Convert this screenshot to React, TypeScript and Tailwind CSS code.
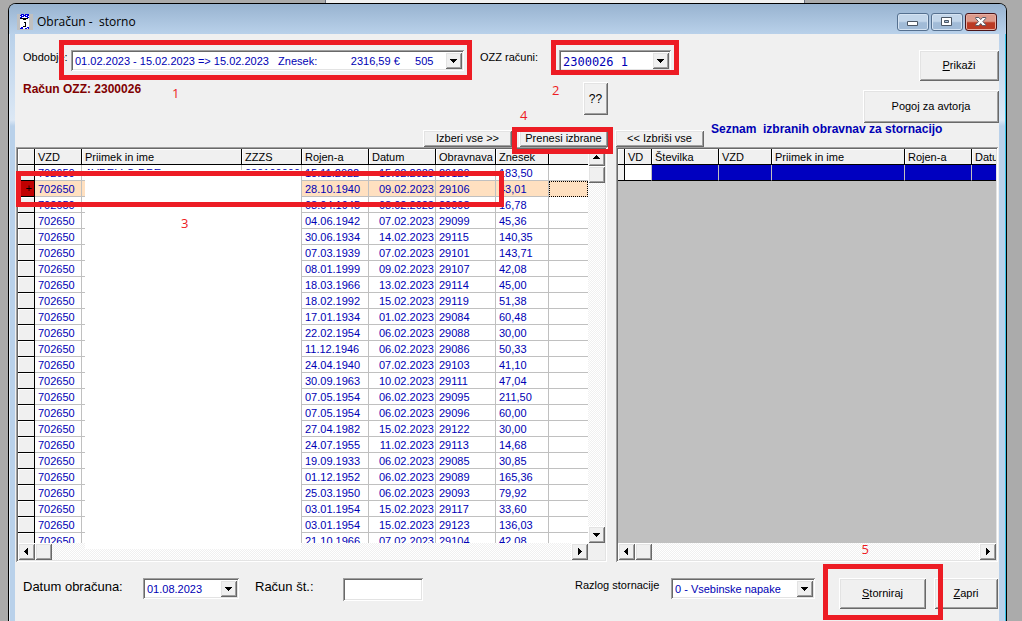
import React from "react";

const RAISED =
  "bg-[#f0f0f0] shadow-[inset_1px_1px_0_#ffffff,inset_-1px_-1px_0_#696969,inset_2px_2px_0_#e3e3e3,inset_-2px_-2px_0_#a0a0a0]";
const SUNKEN =
  "p-[2px] shadow-[inset_1px_1px_0_#a0a0a0,inset_-1px_-1px_0_#ffffff,inset_2px_2px_0_#696969,inset_-2px_-2px_0_#e3e3e3]";
const TRACK = "bg-[repeating-conic-gradient(#ffffff_0_25%,#f0f0f0_0_50%)] bg-[length:2px_2px]";
const TH =
  "h-4 overflow-hidden whitespace-nowrap border-r border-b border-black bg-[#f0f0f0] p-0 pt-px pl-[3px] text-left align-top font-normal leading-[14px] text-black shadow-[inset_1px_1px_0_#ffffff]";
const TD =
  "h-4 overflow-hidden whitespace-nowrap border-r border-b border-[#c0c0c0] p-0 pt-px pl-[3px] leading-[14px]";

type Direction = "up" | "down" | "left" | "right";

const ARROWS: Record<Direction, string> = {
  up: "M4 2h1v1h1v1h1v1h1v1H1V5h1V4h1V3h1z",
  down: "M1 3h7v1H7v1H6v1H5v1H4V6H3V5H2V4H1z",
  left: "M6 1v7H5V7H4V6H3V5H2V4h1V3h1V2h1V1z",
  right: "M3 1v7h1V7h1V6h1V5h1V4H6V3H5V2H4V1z",
};

function Arrow({ dir }: { dir: Direction }) {
  return (
    <svg width="9" height="9" viewBox="0 0 9 9" shapeRendering="crispEdges" aria-hidden="true">
      <path d={ARROWS[dir]} />
    </svg>
  );
}

function ScrollButton({ dir, label }: { dir: Direction; label: string }) {
  return (
    <button aria-label={label} className={`flex h-[17px] w-[17px] shrink-0 items-center justify-center ${RAISED}`}>
      <Arrow dir={dir} />
    </button>
  );
}

function HorizontalScroll() {
  return (
    <div className={`flex h-[17px] flex-1 ${TRACK}`}>
      <ScrollButton dir="left" label="Levo" />
      <div className={`w-[17px] ${RAISED}`} />
      <div className="flex-1" />
      <ScrollButton dir="right" label="Desno" />
    </div>
  );
}

function Mark({ frame }: { frame: string }) {
  return <div className={`pointer-events-none absolute z-20 border-[5px] border-[#ed1c24] ${frame}`} />;
}

function Step({ n, place }: { n: number; place: string }) {
  return (
    <span
      className={`pointer-events-none absolute z-20 font-['Open_Sans','Noto_Sans',sans-serif] text-[13px] leading-4 text-[#ed1c24] ${place}`}
    >
      {n}
    </span>
  );
}

function Combo({ id, text, size, font }: { id: string; text: string; size: string; font: string }) {
  return (
    <div className={`grid h-[21px] bg-white ${SUNKEN} ${size}`}>
      <select
        id={id}
        className={`col-start-1 row-start-1 h-[17px] w-full appearance-none bg-transparent pt-px pl-[2px] text-[#0000b4] outline-none ${font}`}
      >
        <option>{text}</option>
      </select>
      <span
        className={`pointer-events-none col-start-1 row-start-1 flex h-[17px] w-[17px] items-center justify-center justify-self-end ${RAISED}`}
      >
        <Arrow dir="down" />
      </span>
    </div>
  );
}

function Push({ children, size }: { children: React.ReactNode; size: string }) {
  return <button className={`flex shrink-0 items-center justify-center whitespace-nowrap ${RAISED} ${size}`}>{children}</button>;
}

const ROWS: string[][] = [
  ["15.11.2022", "15.02.2023", "29120", "183,50"],
  ["28.10.1940", "09.02.2023", "29106", "43,01"],
  ["08.04.1945", "08.02.2023", "29098", "16,78"],
  ["04.06.1942", "07.02.2023", "29099", "45,36"],
  ["30.06.1934", "14.02.2023", "29115", "140,35"],
  ["07.03.1939", "07.02.2023", "29101", "143,71"],
  ["08.01.1999", "09.02.2023", "29107", "42,08"],
  ["18.03.1966", "13.02.2023", "29114", "45,00"],
  ["18.02.1992", "15.02.2023", "29119", "51,38"],
  ["17.01.1934", "01.02.2023", "29084", "60,48"],
  ["22.02.1954", "06.02.2023", "29088", "30,00"],
  ["11.12.1946", "06.02.2023", "29086", "50,33"],
  ["24.04.1940", "07.02.2023", "29103", "41,10"],
  ["30.09.1963", "10.02.2023", "29111", "47,04"],
  ["07.05.1954", "06.02.2023", "29095", "211,50"],
  ["07.05.1954", "06.02.2023", "29096", "60,00"],
  ["27.04.1982", "15.02.2023", "29122", "30,00"],
  ["24.07.1955", "11.02.2023", "29113", "14,68"],
  ["19.09.1933", "06.02.2023", "29085", "30,85"],
  ["01.12.1952", "06.02.2023", "29089", "165,36"],
  ["25.03.1950", "06.02.2023", "29093", "79,92"],
  ["03.01.1954", "15.02.2023", "29117", "33,60"],
  ["03.01.1954", "15.02.2023", "29123", "136,03"],
  ["21.10.1966", "07.02.2023", "29104", "42,08"],
];

function SourceGrid() {
  return (
    <section className={`relative w-[591px] shrink-0 bg-white ${SUNKEN}`}>
      <div className="flex">
        <div className="h-[394px] w-[570px] overflow-hidden">
          <table className="w-[570px] table-fixed border-separate border-spacing-0 text-[#0000b4]">
            <colgroup>
              <col className="w-[17px]" />
              <col className="w-[47px]" />
              <col className="w-[160px]" />
              <col className="w-[60px]" />
              <col className="w-[67px]" />
              <col className="w-[67px]" />
              <col className="w-[60px]" />
              <col className="w-[53px]" />
              <col className="w-[39px]" />
            </colgroup>
            <thead>
              <tr>
                {["", "VZD", "Priimek in ime", "ZZZS", "Rojen-a", "Datum", "Obravnava", "Znesek"].map((h, i) => (
                  <th key={i} className={TH}>
                    {h}
                  </th>
                ))}
                <th className="h-4 border-b border-black bg-[#f0f0f0] p-0 shadow-[inset_1px_1px_0_#ffffff]" />
              </tr>
            </thead>
            <tbody>
              {ROWS.map(([born, date, visit, amount], i) => (
                <tr key={i} className={i === 1 ? "bg-[#ffe0c0]" : "bg-white"}>
                  <td
                    className={`h-4 border-r border-b border-black p-0 pr-[2px] text-right leading-[15px] text-black ${
                      i === 1 ? "bg-[#c00000]" : "bg-[#f0f0f0] shadow-[inset_1px_1px_0_#ffffff]"
                    }`}
                  >
                    {i === 1 ? "+" : ""}
                  </td>
                  <td className={TD}>702650</td>
                  <td className={TD}>{i === 0 ? "AVDELLO DRE" : ""}</td>
                  <td className={TD}>{i === 0 ? "030100000" : ""}</td>
                  <td className={TD}>{born}</td>
                  <td className={`${TD} pr-px text-right`}>{date}</td>
                  <td className={TD}>{visit}</td>
                  <td className={TD}>{amount}</td>
                  <td
                    className={
                      i === 1
                        ? "h-4 border border-dotted border-black bg-[#ffe0c0] p-0"
                        : "h-4 border-b border-[#c0c0c0] p-0"
                    }
                  />
                </tr>
              ))}
            </tbody>
          </table>
        </div>
        <div className={`flex w-[17px] flex-col ${TRACK}`}>
          <ScrollButton dir="up" label="Gor" />
          <div className={`h-[17px] ${RAISED}`} />
          <div className="flex-1" />
          <ScrollButton dir="down" label="Dol" />
        </div>
      </div>
      <div className="flex">
        <HorizontalScroll />
        <div className="w-[17px] bg-[#f0f0f0]" />
      </div>
      <div className="absolute top-[23px] left-[69px] h-[379px] w-[216px] bg-white" />
      <Mark frame="top-6 left-0 h-9 w-[488px]" />
      <Step n={3} place="top-[68px] left-[165px]" />
    </section>
  );
}

function SelectedGrid() {
  return (
    <section className={`relative flex min-w-0 flex-1 flex-col bg-[#c0c0c0] ${SUNKEN}`}>
      <div className="flex-1 overflow-hidden">
        <table className="w-[421px] table-fixed border-separate border-spacing-0">
          <colgroup>
            <col className="w-[7px]" />
            <col className="w-[27px]" />
            <col className="w-[67px]" />
            <col className="w-[53px]" />
            <col className="w-[133px]" />
            <col className="w-[67px]" />
            <col className="w-[67px]" />
          </colgroup>
          <thead>
            <tr>
              {["", "VD", "Številka", "VZD", "Priimek in ime", "Rojen-a", "Datum"].map((h, i) => (
                <th key={i} className={TH}>
                  {h}
                </th>
              ))}
            </tr>
          </thead>
          <tbody>
            <tr>
              <td className="h-4 border-r border-b border-black bg-[#f0f0f0] p-0" />
              <td className="h-4 border-r border-b border-r-[#c0c0c0] border-b-black bg-white p-0" />
              {[0, 1, 2, 3, 4].map((i) => (
                <td key={i} className="h-4 border-r border-b border-r-[#c0c0c0] border-b-black bg-[#0000c0] p-0" />
              ))}
            </tr>
          </tbody>
        </table>
      </div>
      <div className="flex">
        <HorizontalScroll />
      </div>
      <Step n={5} place="right-[129px] bottom-[5px]" />
    </section>
  );
}

function TitleBar() {
  return (
    <header className="flex h-[30px] items-start justify-between rounded-t-md bg-gradient-to-b from-[#98b3d0] to-[#b9d1ea] pr-[9px] pl-2">
      <div className="flex items-center gap-1 pt-[10px]">
        <svg width="16" height="16" viewBox="0 0 16 16" shapeRendering="crispEdges" aria-hidden="true">
          <path fill="#c0c0c0" d="M0 0h16v16H0z" />
          <path fill="#fff" d="M3 1h9v14H3z" />
          <path
            fill="#0000e0"
            d="M4 0h3v1H4zM8 0h4v1H8zM3 1h2v1H3zM6 1h3v1H6zM10 1h2v1h-2zM4 2h3v1H4zM8 2h3v1H8zM3 3h2v1H3zM10 3h2v1h-2zM4 13h2v1H4zM8 14h2v1H8zM10 13h2v1h-2zM3 14h3v1H3zM11 14h1v1h-1z"
          />
          <path d="M3 4h8v1H3zM6 5h3v1H6zM7 8h2v1H7zM8 9h1v4H8zM6 12h2v1H6z" />
        </svg>
        <h1 className="font-['Open_Sans','Noto_Sans',sans-serif] text-[12px] leading-4 whitespace-pre text-black">
          {"Obračun -  storno"}
        </h1>
      </div>
      <div className="flex gap-[2px] pt-[9px]">
        <button
          aria-label="Pomanjšaj"
          className="flex h-[18px] w-8 items-center justify-center rounded-[3px] border border-[#55708f] bg-gradient-to-b from-[#c3d6ea] from-45% to-[#a1bbd7] to-55% shadow-[inset_0_0_0_1px_#d5e3f2]"
        >
          <svg width="12" height="12" viewBox="0 0 12 12" aria-hidden="true">
            <path fill="#fff" stroke="#4b5664" d="M.5 5.500h10v4H.5z" />
          </svg>
        </button>
        <button
          aria-label="Povečaj"
          className="flex h-[18px] w-8 items-center justify-center rounded-[3px] border border-[#55708f] bg-gradient-to-b from-[#c3d6ea] from-45% to-[#a1bbd7] to-55% shadow-[inset_0_0_0_1px_#d5e3f2]"
        >
          <svg width="12" height="10" viewBox="0 0 12 10" aria-hidden="true">
            <path fill="#fff" stroke="#4b5664" d="M.5.5h10v8H.5z" />
            <path fill="#a9c0d9" stroke="#4b5664" d="M3.500 3.500h4v2h-4z" />
          </svg>
        </button>
        <button
          aria-label="Zapri okno"
          className="flex h-[18px] w-8 items-center justify-center rounded-[3px] border border-[#4a1418] bg-gradient-to-b from-[#dd9a8b] from-45% to-[#bb3a24] to-55% shadow-[inset_0_0_0_1px_#e7aea2]"
        >
          <svg width="12" height="10" viewBox="0 0 12 10" aria-hidden="true">
            <path
              fill="#fff"
              stroke="#565a66"
              d="M.7.5h3.200L5.700 2.600 7.500.5h3.200v1L7.900 4.600l2.800 3v1H7.500L5.700 6.500 3.900 8.600H.7v-1l2.800-3L.7 1.500z"
            />
          </svg>
        </button>
      </div>
    </header>
  );
}

export default function App() {
  return (
    <div className="min-h-screen bg-[#ababab] pr-[15px] pl-2 font-['Liberation_Sans',Arial,sans-serif] text-[11px] text-black">
      <div className="mr-[202px] ml-[317px] h-[3px] border-x border-[#6b7280] bg-[#f0f0f0]" />
      <div className="flex min-h-[618px] flex-col rounded-t-lg border border-b-0 border-black bg-[linear-gradient(#b9d1ea_30px,#dce8f5_116px,#b9d1ea_122px)] shadow-[inset_-1px_0_0_#35c3e8,inset_1px_0_0_#e4eef8]">
        <TitleBar />
        <main className="mr-[7px] ml-[6px] flex-1 bg-[#f0f0f0] pt-4 pr-px">
          <div className="-mr-px flex items-start pl-2">
            <div>
              <div className="flex items-start">
                <label htmlFor="obdobje" className="w-12 leading-[14px]">
                  Obdobje:
                </label>
                <div className="relative">
                  <Combo
                    id="obdobje"
                    size="w-[393px]"
                    font="text-[11px]"
                    text={
                      "01.02.2023 - 15.02.2023 => 15.02.2023\u00a0\u00a0\u00a0Znesek:\u00a0\u00a0\u00a0\u00a0\u00a0\u00a0\u00a0\u00a0\u00a0\u00a0\u00a02316,59 €\u00a0\u00a0\u00a0\u00a0\u00a0505"
                    }
                  />
                  <Mark frame="-left-3 -right-2 -top-[10px] -bottom-[9px]" />
                  <Step n={1} place="top-[35px] left-[101px]" />
                </div>
                <label htmlFor="ozz" className="ml-4 w-[79px] leading-[14px]">
                  OZZ računi:
                </label>
                <div className="relative">
                  <Combo
                    id="ozz"
                    size="w-28"
                    font="font-['DejaVu_Sans_Mono',monospace] text-[12px]"
                    text="2300026 1"
                  />
                  <Mark frame="-inset-x-2 -top-[10px] -bottom-1" />
                  <Step n={2} place="top-8 -left-[7px]" />
                </div>
              </div>
              <div className="flex justify-between pt-[11px] pr-[63px]">
                <p className="text-[12px] leading-[14px] font-bold text-[#800000]">Račun OZZ: 2300026</p>
                <Push size="h-[33px] w-[25px] text-[12px]">??</Push>
              </div>
            </div>
            <div className="ml-auto flex flex-col items-end gap-[9px]">
              <Push size="h-[31px] w-20">
                <span>
                  <u>P</u>rikaži
                </span>
              </Push>
              <Push size="h-[33px] w-34">Pogoj za avtorja</Push>
            </div>
          </div>

          <div className="flex h-6 items-end gap-[7px] pl-[408px]">
            <Push size="h-[17px] w-[89px]">Izberi vse &gt;&gt;</Push>
            <div className="relative">
              <Push size="h-[17px] w-[89px]">Prenesi izbrane</Push>
              <Mark frame="-top-[3px] -bottom-[7px] -left-[7px] -right-[5px]" />
              <Step n={4} place="-top-[23px] left-px" />
            </div>
            <Push size="h-[17px] w-[89px]">&lt;&lt; Izbriši vse</Push>
            <h2 className="self-start pt-px text-[12px] leading-[10px] font-bold whitespace-pre text-[#0000b4]">
              {"Seznam  izbranih obravnav za stornacijo"}
            </h2>
          </div>

          <div className="flex gap-[9px] pl-px">
            <SourceGrid />
            <SelectedGrid />
          </div>

          <div className="flex items-start pt-4 pb-3 pl-2">
            <label htmlFor="datum" className="w-[120px] text-[13px] leading-[18px]">
              Datum obračuna:
            </label>
            <Combo id="datum" size="w-24" font="text-[11px]" text="01.08.2023" />
            <label htmlFor="racun" className="ml-4 w-22 text-[13px] leading-[18px]">
              Račun št.:
            </label>
            <input id="racun" className={`h-[23px] w-20 bg-white outline-none ${SUNKEN}`} />
            <label htmlFor="razlog" className="ml-auto w-24 leading-[14px]">
              Razlog stornacije
            </label>
            <Combo id="razlog" size="w-36" font="text-[11px]" text="0 - Vsebinske napake" />
            <div className="relative ml-6">
              <Push size="h-[31px] w-[87px]">
                <span>
                  <u>S</u>torniraj
                </span>
              </Push>
              <Mark frame="-top-[14px] -bottom-[11px] -left-4 -right-[17px]" />
            </div>
            <div className="ml-2">
              <Push size="h-[31px] w-16">
                <span>
                  <u>Z</u>apri
                </span>
              </Push>
            </div>
          </div>
        </main>
      </div>
    </div>
  );
}
